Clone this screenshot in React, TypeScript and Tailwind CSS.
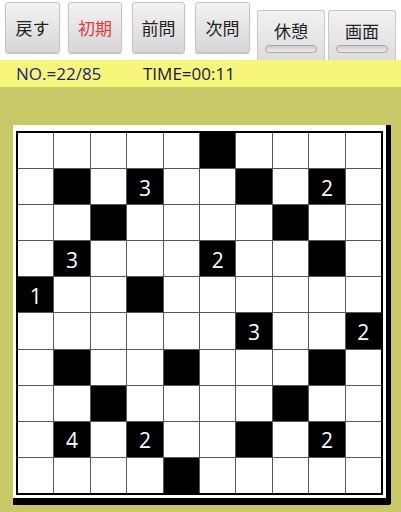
import React from "react";

const BLACK: Record<string, string> = {
  "0,5": "",
  "1,1": "", "1,3": "3", "1,6": "", "1,8": "2",
  "2,2": "", "2,7": "",
  "3,1": "3", "3,5": "2", "3,8": "",
  "4,0": "1", "4,3": "",
  "5,6": "3", "5,9": "2",
  "6,1": "", "6,4": "", "6,8": "",
  "7,2": "", "7,7": "",
  "8,1": "4", "8,3": "2", "8,6": "", "8,8": "2",
  "9,4": "",
};

const jp = { fontFamily: '"Noto Sans CJK JP", "Noto Sans", sans-serif' };

function Btn({ label, red, ml }: { label: string; red?: boolean; ml: string }) {
  return (
    <div
      className={`${ml} mt-[2px] h-[51px] flex items-center justify-center rounded-[3px] border border-[#c4c4c4] bg-gradient-to-b from-[#f3f3f3] to-[#d6d6d6] shadow-[0_1px_1px_rgba(0,0,0,0.25)] text-[17px] ${red ? "text-[#e43b3b]" : "text-[#222]"}`}
      style={jp}
    >
      {label}
    </div>
  );
}

function Toggle({ label, ml }: { label: string; ml: string }) {
  return (
    <div
      className={`${ml} mt-[10px] h-[52px] flex flex-col items-center rounded-t-[3px] border border-b-0 border-[#c8c8c8] bg-gradient-to-b from-[#f2f2f2] to-[#dcdcdc] text-[17px] text-[#222]`}
      style={jp}
    >
      <div className="mt-[9px] leading-[22px]">{label}</div>
      <div className="mt-[3px] h-[8px] w-[78%] rounded-full border border-[#a8a8a8] bg-gradient-to-b from-[#cfcfcf] to-[#ececec]" />
    </div>
  );
}

export default function App() {
  const cells = [];
  for (let r = 0; r < 10; r++) {
    for (let c = 0; c < 10; c++) {
      const k = `${r},${c}`;
      const isBlack = k in BLACK;
      cells.push(
        <div
          key={k}
          className={`flex items-center justify-center ${isBlack ? "bg-black" : "bg-white"} text-white text-[21px] leading-none pt-[3px]`}
          style={{ fontFamily: '"Open Sans", sans-serif' }}
        >
          {isBlack ? BLACK[k] : ""}
        </div>
      );
    }
  }
  return (
    <div className="w-[401px] h-[512px] flex flex-col bg-[#c9c866] overflow-hidden">
      <div className="h-[60px] bg-white flex items-start overflow-hidden shrink-0">
        <div className="ml-[5px] w-[55px] flex"><Btn label="戻す" ml="w-full" /></div>
        <div className="ml-[8px] w-[54px] flex"><Btn label="初期" red ml="w-full" /></div>
        <div className="ml-[10px] w-[53px] flex"><Btn label="前問" ml="w-full" /></div>
        <div className="ml-[10px] w-[55px] flex"><Btn label="次問" ml="w-full" /></div>
        <div className="ml-[7px] w-[68px] flex flex-col"><Toggle label="休憩" ml="w-full" /></div>
        <div className="ml-[3px] w-[68px] flex flex-col"><Toggle label="画面" ml="w-full" /></div>
      </div>
      <div
        className="h-[27px] bg-[#f6f67a] flex items-center text-[17px] shrink-0"
        style={{ fontFamily: '"Open Sans", sans-serif' }}
      >
        <span className="ml-[16px] w-[127px] text-[#222288]">NO.=22/85</span>
        <span className="text-[#16163a]">TIME=00:11</span>
      </div>
      <div className="mt-[38px] ml-[13px] w-[378px] bg-white pt-[6px] pl-[3px] pr-[3px] pb-[3px] border-r-[5px] border-b-[7px] border-black rounded-br-[3px]">
        <div className="w-[367px] h-[364px] border-2 border-black bg-[#585858] grid grid-cols-10 grid-rows-10 gap-px">
          {cells}
        </div>
      </div>
    </div>
  );
}
